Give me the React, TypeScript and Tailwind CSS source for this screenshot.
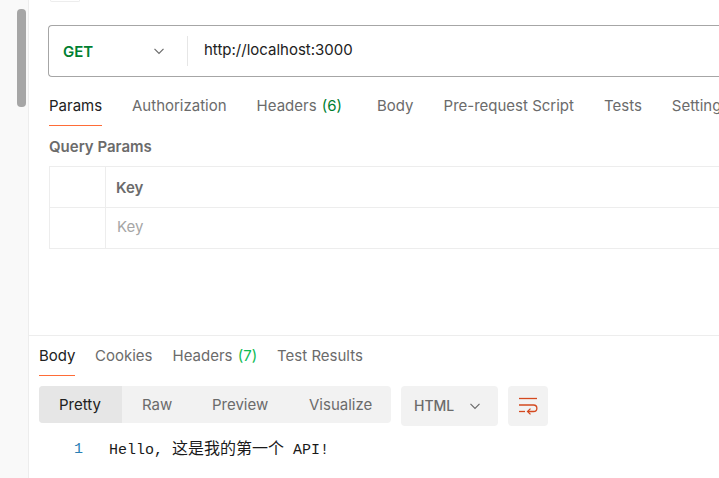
import React from "react";

const Chevron = () => (
  <svg width="12" height="12" viewBox="0 0 12 12" fill="none" stroke="#6b6b6b" strokeWidth="1.2" className="shrink-0">
    <path d="M1.5 3.8 L6 8.3 L10.5 3.8" />
  </svg>
);

const inter = "font-['Inter',sans-serif]";

export default function App() {
  return (
    <div className={`flex w-[719px] h-[478px] overflow-hidden bg-white ${inter} text-[15px] leading-[20px] text-[#6b6b6b]`}>
      {/* rail with scrollbar */}
      <div className="w-[29px] shrink-0 bg-[#f9f9f9] border-r border-[#ededed] pt-[9px] pl-[17px]">
        <div className="w-[9px] h-[98px] rounded-[4px] bg-[#a6a6a6]" />
      </div>

      <div className="flex-1 min-w-0 flex flex-col">
        {/* request pane */}
        <div className="h-[335px] shrink-0 border-b border-[#ededed] box-content pl-[20px] overflow-hidden">
          <div className="w-[30px] h-[2px] ml-[1px] border border-t-0 border-[#ededed] rounded-b-[3px]" />
          {/* URL bar */}
          <div className="mt-[23px] -ml-[1px] w-[700px] h-[52px] border border-[#a6a6a6] rounded-l-[4px] border-r-0 flex items-center">
            <div className="w-[139px] shrink-0 h-[30px] border-r border-[#e6e6e6] flex items-center pl-[14px] pr-[22px] justify-between">
              <span className="font-semibold text-[#007f31] mt-[1px]">GET</span>
              <Chevron />
            </div>
            <span className="pl-[16px] text-[#212121] -mt-[3px]">http://localhost:3000</span>
          </div>
          {/* tabs */}
          <div className="flex gap-[30px] mt-[19px] h-[30px] whitespace-nowrap">
            <span className="text-[#212121] border-b border-[#ff6c37] h-[30px] w-[53px]">Params</span>
            <span>Authorization</span>
            <span className="mr-[5px]">Headers <span className="text-[#007f31] ml-[1px]">(6)</span></span>
            <span>Body</span>
            <span>Pre-request Script</span>
            <span>Tests</span>
            <span>Settings</span>
          </div>
          <div className="mt-[11px] font-semibold text-[#6b6b6b] h-[19px] leading-[19px]">Query Params</div>
          {/* table */}
          <div className="mt-[10px] border-t border-l border-[#ededed] w-[700px]">
            <div className="flex h-[41px] border-b border-[#ededed]">
              <div className="w-[56px] border-r border-[#ededed]" />
              <div className="pl-[10px] font-semibold leading-[41px]">Key</div>
            </div>
            <div className="flex h-[41px] border-b border-[#ededed]">
              <div className="w-[56px] border-r border-[#ededed]" />
              <div className="pl-[11px] text-[#a6a6a6] leading-[38px]">Key</div>
            </div>
          </div>
        </div>

        {/* response pane */}
        <div className="pl-[10px]">
          <div className="flex gap-[20px] h-[40px] whitespace-nowrap">
            <span className="text-[#212121] h-[40px] w-[36px] border-b border-[#ff6c37] pt-[10px]">Body</span>
            <span className="pt-[10px]">Cookies</span>
            <span className="pt-[10px]">Headers <span className="text-[#0cbb52] ml-[1px]">(7)</span></span>
            <span className="pt-[10px]">Test Results</span>
          </div>
          <div className="flex items-start mt-[10px]">
            <div className="flex h-[37px] w-[352px] rounded-[4px] bg-[#f2f2f2] overflow-hidden">
              <span className="w-[83px] bg-[#e6e6e6] text-[#212121] pl-[20px] leading-[37px]">Pretty</span>
              <span className="pl-[20px] w-[70px] leading-[37px]">Raw</span>
              <span className="pl-[20px] w-[97px] leading-[37px]">Preview</span>
              <span className="pl-[20px] leading-[37px]">Visualize</span>
            </div>
            <div className="ml-[10px] w-[97px] h-[40px] rounded-[4px] bg-[#f2f2f2] flex items-center pl-[13px] pr-[17px] justify-between">
              <span className="font-medium text-[14px] text-[#6b6b6b]">HTML</span>
              <Chevron />
            </div>
            <div className="ml-[10px] w-[40px] h-[40px] rounded-[4px] bg-[#f2f2f2] flex items-center justify-center">
              <svg width="20" height="20" viewBox="0 0 20 20" fill="none" stroke="#d4491f" strokeWidth="1.3">
                <path d="M1 2.5 H19" />
                <path d="M1 9 H15.5 C20 9 20 15.5 15.5 15.5 H10" />
                <path d="M12.5 12.6 L9.5 15.5 L12.5 18.4" />
                <path d="M1 15.5 H7" />
              </svg>
            </div>
          </div>
          <div className="flex mt-[14px] h-[20px] items-center text-[15px] font-['Liberation_Mono','Noto_Sans_CJK_SC',monospace]">
            <span className="w-[45px] pl-[35px] text-[#2a7fb5]">1</span>
            <span className="ml-[25px] text-[#1a1a1a] whitespace-pre">Hello, <span className="text-[16px]">这是我的第一个</span> API!</span>
          </div>
        </div>
      </div>
    </div>
  );
}
